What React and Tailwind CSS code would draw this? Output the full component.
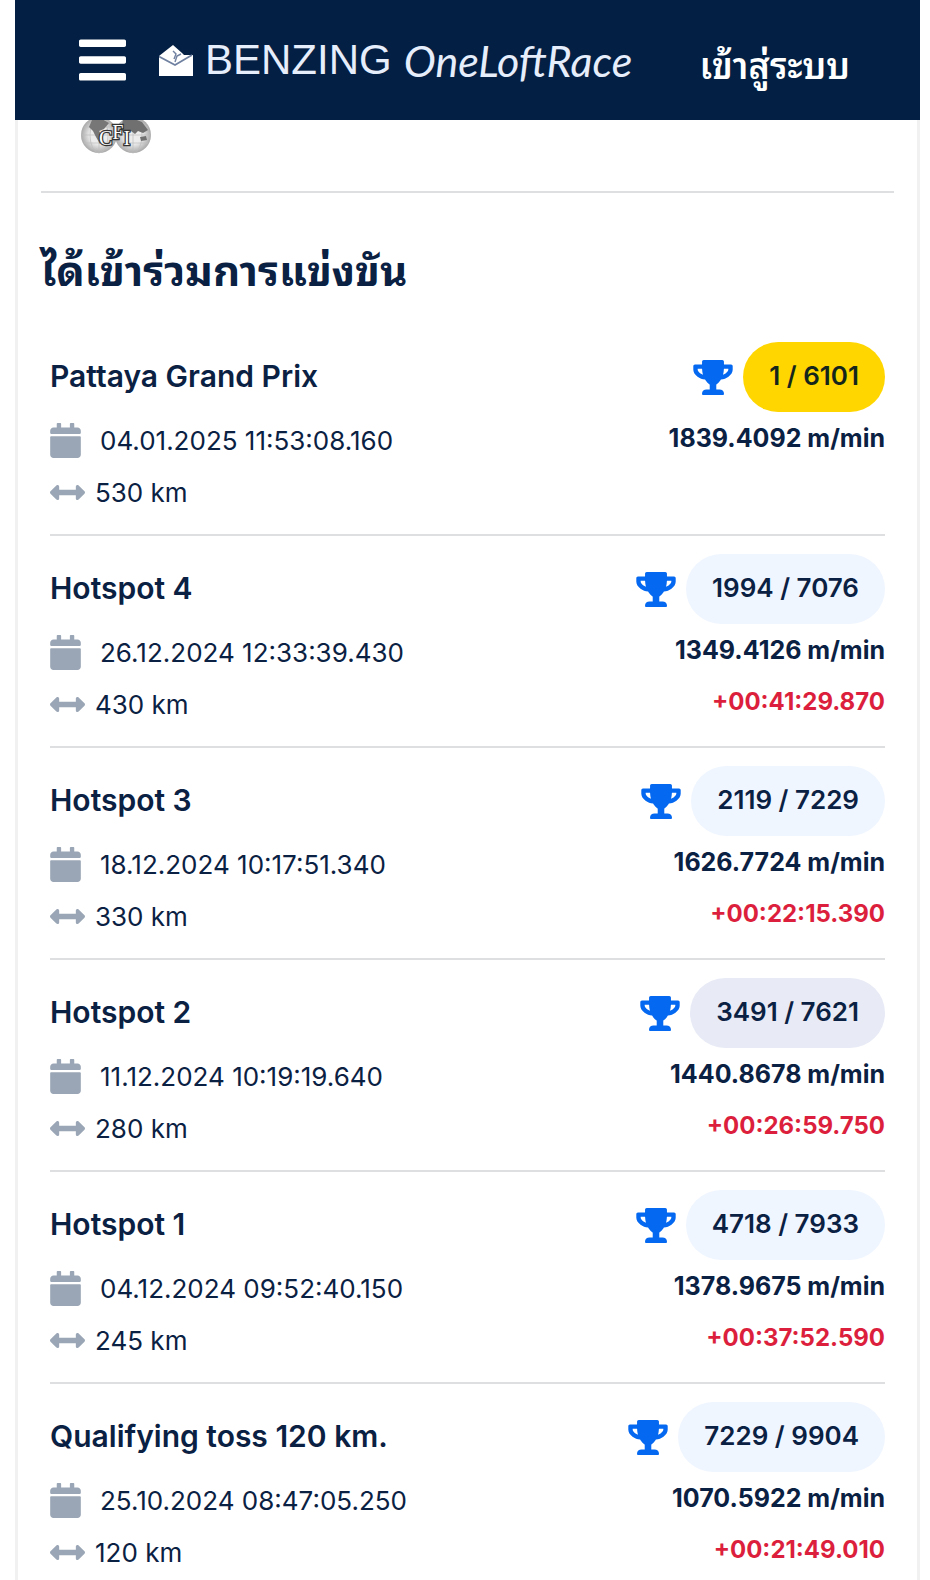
import { FaTrophy, FaCalendar, FaArrowsAltH, FaBars } from "react-icons/fa";

const races = [
  {
    name: "Pattaya Grand Prix",
    date: "04.01.2025 11:53:08.160",
    distance: "530 km",
    rank: "1 / 6101",
    speed: "1839.4092 m/min",
    badge: "bg-[#ffd600] text-[#14261c]",
  },
  {
    name: "Hotspot 4",
    date: "26.12.2024 12:33:39.430",
    distance: "430 km",
    rank: "1994 / 7076",
    speed: "1349.4126 m/min",
    gap: "+00:41:29.870",
    badge: "bg-[#f0f6ff]",
  },
  {
    name: "Hotspot 3",
    date: "18.12.2024 10:17:51.340",
    distance: "330 km",
    rank: "2119 / 7229",
    speed: "1626.7724 m/min",
    gap: "+00:22:15.390",
    badge: "bg-[#f0f6ff]",
  },
  {
    name: "Hotspot 2",
    date: "11.12.2024 10:19:19.640",
    distance: "280 km",
    rank: "3491 / 7621",
    speed: "1440.8678 m/min",
    gap: "+00:26:59.750",
    badge: "bg-[#e8ebf6]",
  },
  {
    name: "Hotspot 1",
    date: "04.12.2024 09:52:40.150",
    distance: "245 km",
    rank: "4718 / 7933",
    speed: "1378.9675 m/min",
    gap: "+00:37:52.590",
    badge: "bg-[#f0f6ff]",
  },
  {
    name: "Qualifying toss 120 km.",
    date: "25.10.2024 08:47:05.250",
    distance: "120 km",
    rank: "7229 / 9904",
    speed: "1070.5922 m/min",
    gap: "+00:21:49.010",
    badge: "bg-[#f0f6ff]",
  },
];

const LoftIcon = () => (
  <svg viewBox="0 0 34 31" className="w-[34px] h-[31px] shrink-0" aria-hidden="true">
    <path d="M0 11 14 0l9 8 2 2h9v21H0z" fill="#fff" />
    <path d="M0 11.5 16 20l17-10" fill="none" stroke="#6f80a0" strokeWidth="1.8" />
    <path d="M14 6l3 3-2 5M22 9l-4 2-2 6" fill="none" stroke="#6f80a0" strokeWidth="1.4" />
  </svg>
);

const FciLogo = () => (
  <svg viewBox="0 0 70 37" className="w-[70px] h-[37px]" role="img" aria-label="FCI">
    <defs>
      <radialGradient id="globe">
        <stop offset="0.5" stopColor="#ececec" />
        <stop offset="1" stopColor="#a9a9a9" />
      </radialGradient>
    </defs>
    <circle cx="18" cy="18" r="18" fill="url(#globe)" />
    <circle cx="52" cy="18" r="18" fill="url(#globe)" />
    <g fill="none" stroke="#bdbdbd" strokeWidth="0.7">
      <path d="M0 18h36M3 10h30M3 26h30M18 0v36" />
      <ellipse cx="18" cy="18" rx="9" ry="18" />
      <path d="M34 18h36M37 10h30M37 26h30M52 0v36" />
      <ellipse cx="52" cy="18" rx="9" ry="18" />
    </g>
    <path d="M11 3l8-2 9 5-5 6-5 2 4 6-3 7-4-7-3-6-4-4z" fill="#777" />
    <path d="M42 3l9-2 10 4 6 8-5 3-5-2-3 3-4-3-6 3-4-5zM59 20l6-1 1 4-6 1z" fill="#707070" />
    <text
      x="18"
      y="28"
      fontFamily="Liberation Serif, serif"
      fontSize="20"
      fill="#fff"
      stroke="#333"
      strokeWidth="2.4"
      paintOrder="stroke"
    >
      C<tspan dy="-6">F</tspan><tspan dy="6">I</tspan>
    </text>
  </svg>
);

const Header = () => (
  <header className="sticky top-0 z-10 flex h-[120px] items-center bg-[#031f43] pl-16 pr-[70px] text-white">
    <button type="button" aria-label="Menu" className="shrink-0">
      <FaBars className="h-[54px] w-[47px]" />
    </button>
    <a href="#home" className="ml-[33px] flex items-center whitespace-nowrap text-[#e6edfb]">
      <LoftIcon />
      <span className="ml-3 font-['Liberation_Sans',sans-serif] text-[42px] leading-none">
        BENZING
      </span>
      <span className="ml-3 font-['Lato',cursive] text-[43px] italic leading-none">
        OneLoftRace
      </span>
    </a>
    <a href="#login" className="ml-auto whitespace-nowrap pt-3 text-[36px] font-semibold leading-none">
      เข้าสู่ระบบ
    </a>
  </header>
);

const RaceRow = ({ race }) => (
  <li className="flex justify-between border-b-2 border-[#dedfe1] pb-4 pt-[18px]">
    <div>
      <h3 className="text-[30px] font-semibold leading-[68px]">{race.name}</h3>
      <div className="mt-1 flex h-[52px] items-center text-[26px]">
        <FaCalendar className="h-[35px] w-[31px] text-[#9aa6b5]" />
        <span className="ml-[19px]">{race.date}</span>
      </div>
      <div className="flex h-[52px] items-center text-[26px]">
        <FaArrowsAltH className="h-[35px] w-[35px] text-[#9aa6b5]" />
        <span className="ml-[10px]">{race.distance}</span>
      </div>
    </div>
    <div className="text-right text-[25px] font-bold leading-[52px]">
      <div className="flex items-center justify-end text-[26px] font-semibold">
        <FaTrophy className="h-[35px] w-[40px] text-[#0468f0]" />
        <span className={`ml-[10px] rounded-full px-[26px] pb-0.5 leading-[68px] ${race.badge}`}>
          {race.rank}
        </span>
      </div>
      <p>{race.speed}</p>
      {race.gap && <p className="text-[24px] text-[#dc1f3c]">{race.gap}</p>}
    </div>
  </li>
);

const App = () => {
  return (
    <div className="h-screen overflow-hidden bg-white pl-[15px] pr-[10px] font-['Inter','Noto_Sans_Thai_Looped','Loma','Noto_Sans_Thai',sans-serif] text-[#0b2143]">
      <Header />
      <main className="border-x-[3px] border-[#f1f1f2] px-[23px]">
        {/* Partner logos */}
        <div className="-mt-[3px] h-[74px] pl-10">
          <FciLogo />
        </div>
        <hr className="border-t-2 border-[#dedfe1]" />

        {/* Races */}
        <h2 className="pt-[46px] text-[42px] font-bold leading-[64px]">
          ได้เข้าร่วมการแข่งขัน
        </h2>
        <ul className="mt-[21px] px-[9px]">
          {races.map((race) => (
            <RaceRow key={race.name} race={race} />
          ))}
        </ul>
      </main>
    </div>
  );
};

export default App;
